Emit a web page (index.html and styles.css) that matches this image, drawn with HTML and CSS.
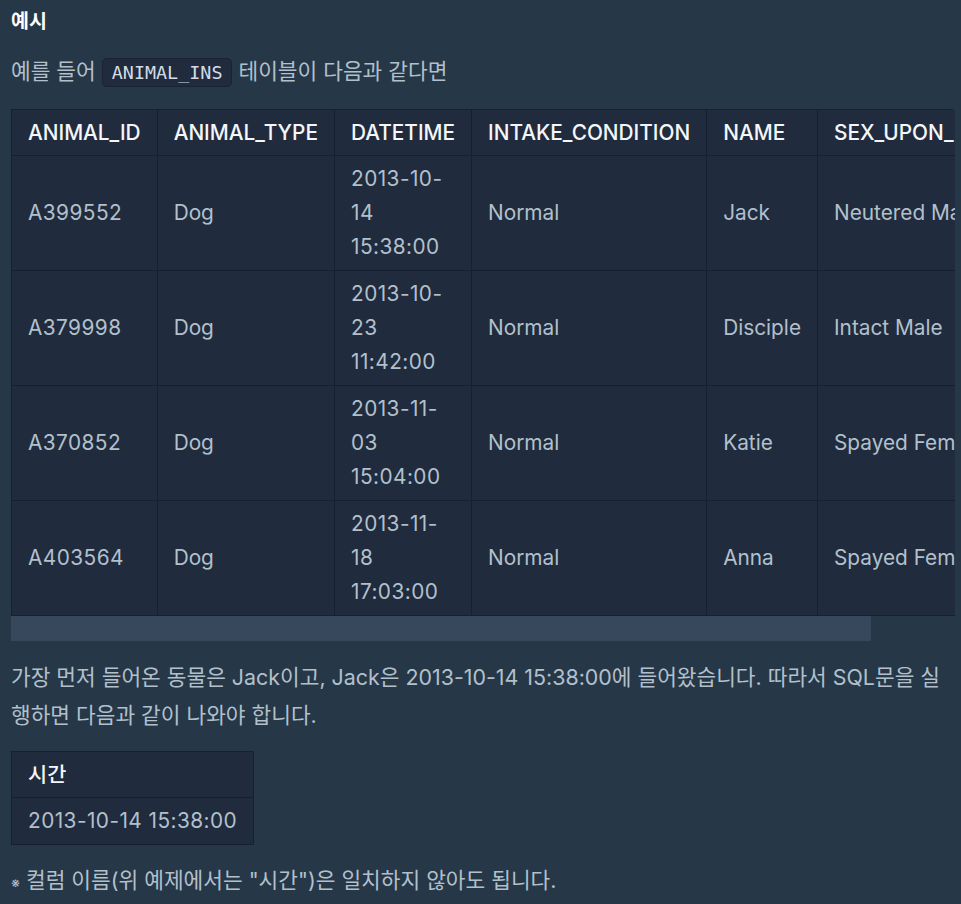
FILE: index.html
```html
<!DOCTYPE html>
<html lang="ko">
<head>
<meta charset="utf-8">
<link rel="stylesheet" href="styles.css">
</head>
<body>
<div class="content">
  <h5 class="heading">예시</h5>
  <p class="para first">예를 들어 <code class="chip">ANIMAL_INS</code> 테이블이 다음과 같다면</p>
  <div class="scroller">
    <table class="data wide">
      <thead>
        <tr><th>ANIMAL_ID</th><th>ANIMAL_TYPE</th><th>DATETIME</th><th>INTAKE_CONDITION</th><th>NAME</th><th>SEX_UPON_INTAKE</th></tr>
      </thead>
      <tbody>
        <tr><td class="num">A399552</td><td>Dog</td><td class="num">2013-10-14 15:38:00</td><td>Normal</td><td>Jack</td><td>Neutered Male</td></tr>
        <tr><td class="num">A379998</td><td>Dog</td><td class="num">2013-10-23 11:42:00</td><td>Normal</td><td>Disciple</td><td>Intact Male</td></tr>
        <tr><td class="num">A370852</td><td>Dog</td><td class="num">2013-11-03 15:04:00</td><td>Normal</td><td>Katie</td><td>Spayed Female</td></tr>
        <tr><td class="num">A403564</td><td>Dog</td><td class="num">2013-11-18 17:03:00</td><td>Normal</td><td>Anna</td><td>Spayed Female</td></tr>
      </tbody>
    </table>
  </div>
  <div class="scrollbar"><div class="thumb"></div></div>
  <p class="para after">가장 먼저 들어온 동물은 Jack이고, Jack은 2013-10-14 15:38:00에 들어왔습니다. 따라서 SQL문을 실행하면 다음과 같이 나와야 합니다.</p>
  <table class="data result">
    <thead><tr><th>시간</th></tr></thead>
    <tbody><tr><td class="num">2013-10-14 15:38:00</td></tr></tbody>
  </table>
  <p class="para note"><span class="mark">※</span> 컬럼 이름(위 예제에서는 "시간")은 일치하지 않아도 됩니다.</p>
</div>
</body>
</html>
```
FILE: styles.css
```css
html, body {
  margin: 0;
  padding: 0;
  background: #263747;
}
body {
  font-family: Inter, "Noto Sans CJK KR", sans-serif;
  font-size: 21.4px;
  color: #b2c0cc;
}
.content {
  padding: 2px 6px 0 11px;
}
.heading {
  margin: 0;
  font-size: 19.5px;
  line-height: 38px;
  font-weight: 700;
  color: #ffffff;
}
.para {
  margin: 0;
  line-height: 38px;
  color: #b2c0cc;
}
.para.first {
  margin-top: 12px;
  margin-bottom: 17px;
}
.chip {
  font-family: "DejaVu Sans Mono", monospace;
  font-size: 18.4px;
  color: #d3dce6;
  background: #202b3d;
  border: 1px solid #1a2333;
  border-radius: 5px;
  padding: 3px 9px;
}
.scroller {
  overflow: hidden;
  border-top-right-radius: 4px;
}
.scrollbar {
  height: 25px;
}
.thumb {
  width: 860px;
  height: 25px;
  background: #37485c;
}
.data {
  border-collapse: collapse;
  background: #202b3d;
  border: 1px solid #172030;
  font-size: 20.8px;
}
.wide {
  width: 100%;
}
.data th,
.data td {
  border: 1px solid #172030;
  padding: 6px 16px;
  line-height: 34px;
  text-align: left;
  vertical-align: middle;
}
.data th {
  padding: 6px 16px 5px;
  color: #f4f6f9;
  font-weight: 500;
}
.data td {
  color: #b2c0cc;
}
.data td.num {
  letter-spacing: 0.45px;
}
.para.after {
  margin-top: 17px;
  margin-bottom: 17px;
}
.para.note {
  margin-top: 16px;
}
.mark {
  font-size: 14px;
}
```
